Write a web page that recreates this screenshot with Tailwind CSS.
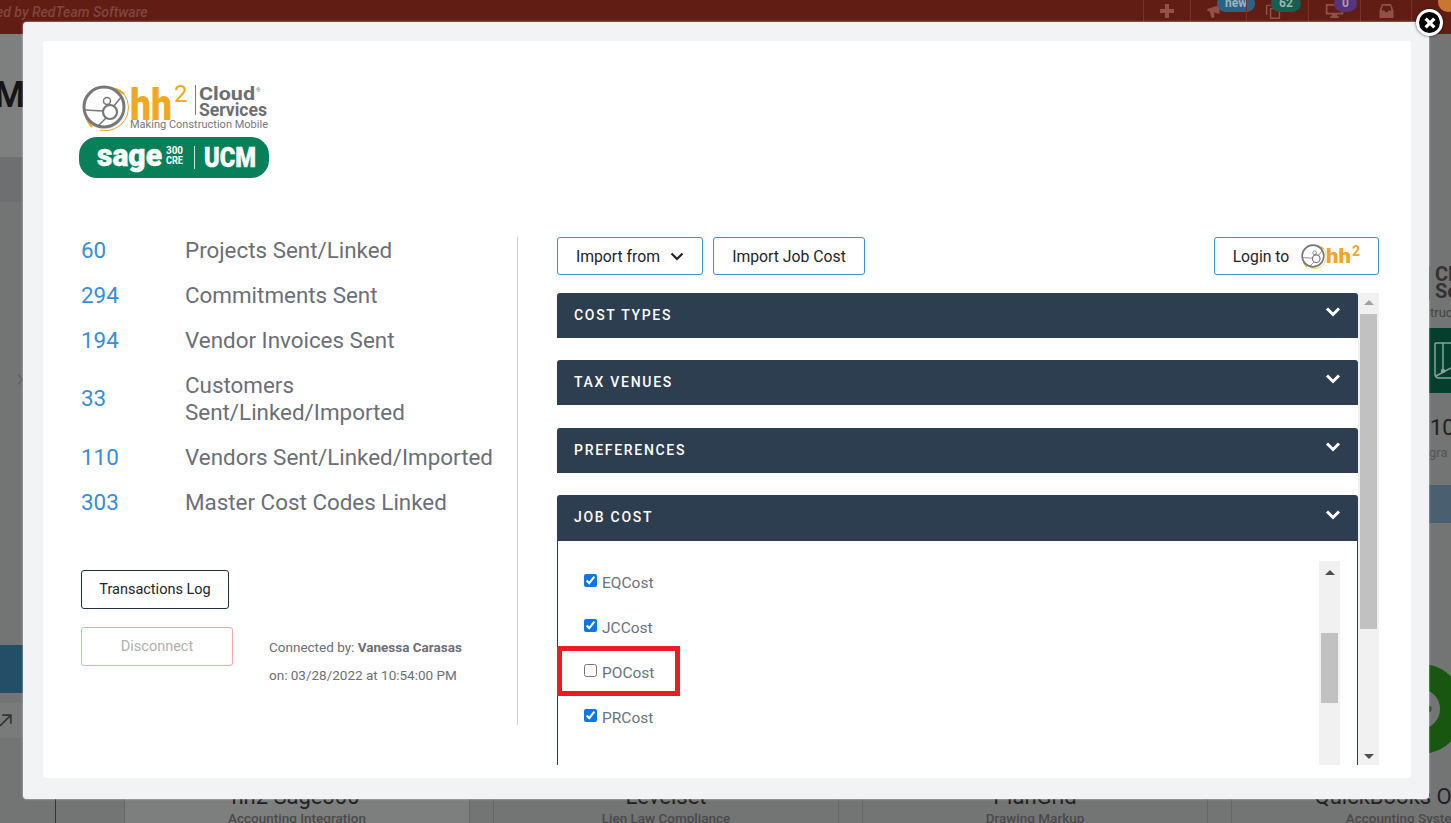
<!DOCTYPE html>
<html lang="en">
<head>
    <meta charset="UTF-8">
    <meta name="viewport" content="width=device-width, initial-scale=1.0">
    <title>hh2 Cloud Services</title>
    <script src="https://cdn.jsdelivr.net/npm/@tailwindcss/browser@4"></script>
</head>
<body class="bg-[#737474] font-[Roboto,sans-serif]">

    <!-- shared hh2 mark -->
    <svg class="hidden" xmlns="http://www.w3.org/2000/svg">
        <symbol id="hh2Mark" viewBox="0 0 48 48">
            <path d="M12 44A23 23 0 0 1 44 11" fill="none" stroke="#f0a722" stroke-width="2.200"/>
            <path d="M44 11A23 23 0 0 1 20 47" fill="none" stroke="#f0a722" stroke-width="1"/>
            <circle cx="24" cy="24" r="20" fill="#fff" stroke="#77787b" stroke-width="3"/>
            <g fill="none" stroke="#77787b" stroke-width="1.500">
                <circle cx="30" cy="29" r="7" stroke-width="2.200"/>
                <circle cx="27" cy="18" r="3.500"/>
                <path d="M5 27l18 1M28 21l1 2M34 23l8-10M26 35l-8 8"/>
            </g>
        </symbol>
    </svg>

    <div class="relative h-[823px] w-[1451px] overflow-hidden">

        <!-- Page behind the modal -->
        <div class="flex h-full flex-col">
            <div class="relative flex h-[34px] shrink-0 items-center justify-between bg-[#611d14]">
                <span class="-ml-[4px] -mt-[10px] text-sm italic font-medium text-[#80453d]">ed by RedTeam Software</span>
                <div class="flex h-full items-center text-[#8f524a]">
                    <div class="flex h-full w-[47px] items-center justify-center border-l border-[#743329] pb-[12px]">
                        <svg class="h-3.5 w-3.5" viewBox="0 0 14 14" fill="currentColor"><path d="M5 0h4v5h5v4H9v5H5V9H0V5h5z"/></svg>
                    </div>
                    <div class="relative flex h-full w-[56px] items-center justify-center border-l border-[#743329] pb-[12px]">
                        <svg class="-ml-[6px] h-[13px] w-[17px]" viewBox="0 0 20 16" fill="currentColor"><path d="M0 5l15-5v11L8 9l1 6-4 1-2-8-3-1z"/></svg>
                        <span class="absolute -top-[5px] left-[26px] rounded-full bg-[#2b6384] px-2 text-xs leading-[17px] font-bold text-[#9fb4bd]">new</span>
                    </div>
                    <div class="relative flex h-full w-[62px] items-center justify-center border-l border-[#743329] pb-[12px]">
                        <svg class="-ml-[10px] h-4 w-4" viewBox="0 0 20 20" fill="none" stroke="currentColor" stroke-width="1.800"><path d="M2 3v12M2 3h5M7 7h11v12H7z"/></svg>
                        <span class="absolute -top-[5px] left-[24px] rounded-full bg-[#14614f] px-2 text-xs leading-[17px] font-bold text-[#9fb4ab]">62</span>
                    </div>
                    <div class="relative flex h-full w-[52px] items-center justify-center border-l border-[#743329] pb-[12px]">
                        <svg class="h-[14px] w-[19px]" viewBox="0 0 20 16" fill="currentColor"><path d="M0 0h20v12h-7v2h2v2H5v-2h2v-2H0zM2 2v8h16V2z"/></svg>
                        <span class="absolute -top-[5px] left-[25px] rounded-full bg-[#55347a] px-2 text-xs leading-[17px] font-bold text-[#a99ab5]">0</span>
                    </div>
                    <div class="flex h-full w-[51px] items-center justify-center border-l border-[#743329] pb-[12px]">
                        <svg class="h-[14px] w-[17px]" viewBox="0 0 17 17" fill="currentColor"><path d="M3 0h11l3 8v9H0V8zM4 2L2.500 8H6l1 2h3l1-2h3.500L13 2z"/></svg>
                    </div>
                    <div class="relative h-full w-10 border-l border-[#743329]">
                        <span class="absolute -top-2 left-[26px] h-5 w-5 rounded-full bg-[#c8772e]"></span>
                    </div>
                </div>
            </div>

            <div class="flex h-[753px] shrink-0 justify-between">
                <!-- left sliver -->
                <div class="flex w-[23px] flex-col overflow-hidden">
                    <div class="flex h-[123px] shrink-0 items-center bg-[#7e7f7f]">
                        <span class="text-[36px] leading-none font-bold text-[#151515] -ml-[6px] -mt-[2px]">M</span>
                    </div>
                    <div class="h-[45px] shrink-0 bg-[#6e6f70]"></div>
                    <div class="flex h-[183px] shrink-0 items-end justify-end">
                        <svg class="h-[11px] w-[5px]" viewBox="0 0 5 11" fill="none" stroke="#5f6061" stroke-width="1.200"><path d="M0 .5l4.500 5-4.500 5"/></svg>
                    </div>
                    <div class="h-[260px] shrink-0"></div>
                    <div class="h-[48px] shrink-0 bg-[#244e68]"></div>
                    <div class="mt-[10px] flex h-[35px] shrink-0 items-center rounded-r bg-[#797a7a]">
                        <svg class="h-[13px] w-[13px]" viewBox="0 0 12 12" fill="none" stroke="#333" stroke-width="1.500"><path d="M0 11L10 1M2 1h8v8"/></svg>
                    </div>
                </div>
                <!-- right sliver -->
                <div class="flex w-[22px] flex-col overflow-hidden">
                    <div class="h-[232px] shrink-0"></div>
                    <div class="flex shrink-0 flex-col border-l border-[#555] pl-[5px] text-[20px] leading-[17px] font-bold text-[#333]">
                        <span>Cl</span>
                        <span>Se</span>
                    </div>
                    <span class="mt-[5px] shrink-0 pl-[1px] text-[13px] leading-[16px] text-[#444]">truc</span>
                    <svg class="mt-[7px] h-[65px] w-[22px] shrink-0 bg-[#033f2c]" viewBox="0 0 22 65" fill="none" stroke="#8aa399" stroke-width="1.500">
                        <path d="M6 15v31q0 4 4 4h12M6 15h16M14 15v27M7 48l15-8"/>
                        <circle cx="14" cy="43" r="1.500" fill="#8aa399"/>
                    </svg>
                    <span class="mt-[23px] shrink-0 pl-[1px] text-[22px] leading-[24px] text-[#1f1f1f]">10</span>
                    <span class="mt-[4px] shrink-0 text-[13px] leading-[18px] text-[#555]">gra</span>
                    <div class="mt-[23px] h-[38px] shrink-0 bg-[#4a6070]"></div>
                    <svg class="mt-[141px] h-[90px] w-[22px] shrink-0" viewBox="0 0 22 90">
                        <circle cx="-9" cy="45" r="32.500" fill="none" stroke="#17570f" stroke-width="25"/>
                        <circle cx="-1" cy="45" r="3.500" fill="#17570f"/>
                    </svg>
                </div>
            </div>

            <!-- cards strip, mostly covered by the modal -->
            <div class="flex flex-1 pl-[55px] text-center">
                <div class="w-[69px] shrink-0 border-l border-[#333]"></div>
                <div class="w-[346px] shrink-0 border-x border-[#666] bg-[#7d7e7e]">
                    <p class="-ml-[3px] text-[22px] leading-[20px] text-[#1f1f1f]">hh2 Sage300</p>
                    <p class="mt-[3px] text-[13.500px] leading-[16px] font-medium text-[#4a4a4a]">Accounting Integration</p>
                </div>
                <div class="ml-[23px] w-[346px] shrink-0 border-x border-[#666]">
                    <p class="text-[22px] leading-[20px] text-[#1f1f1f]">Levelset</p>
                    <p class="mt-[3px] text-[13.500px] leading-[16px] font-medium text-[#4a4a4a]">Lien Law Compliance</p>
                </div>
                <div class="ml-[23px] w-[346px] shrink-0 border-x border-[#666]">
                    <p class="text-[22px] leading-[20px] text-[#1f1f1f]">PlanGrid</p>
                    <p class="mt-[3px] text-[13.500px] leading-[16px] font-medium text-[#4a4a4a]">Drawing Markup</p>
                </div>
                <div class="ml-[23px] w-[346px] shrink-0 border-l border-[#666]">
                    <p class="ml-[4px] text-[22px] leading-[20px] text-[#1f1f1f]">QuickBooks Online</p>
                    <p class="mt-[3px] text-[13.500px] leading-[16px] font-medium text-[#4a4a4a]">Accounting System</p>
                </div>
            </div>
        </div>

        <!-- Modal -->
        <div class="absolute top-[22px] left-[23px] h-[777px] w-[1406px] rounded-sm bg-[#f1f3f5] pt-[19px] pl-5 shadow-[0_0_2px_rgba(255,255,255,0.8)]">
            <div class="flex h-[737px] w-[1368px] flex-col rounded-[3px] bg-white pt-[42px] pl-[38px]">

                <!-- Logo -->
                <svg class="-ml-[2px] h-[96px] w-[192px] shrink-0" viewBox="0 0 192 96">
                    <use href="#hh2Mark" x="0" y="0" width="50" height="48"/>
                    <text transform="translate(51 36.500) scale(1 1.200)" font-family="Roboto" font-weight="900" font-size="37" fill="#f0a722" textLength="42" lengthAdjust="spacingAndGlyphs">hh</text>
                    <text x="95" y="19" font-family="Roboto" font-size="24" fill="#f0a722">2</text>
                    <path d="M116.500 2v30" stroke="#77787b" stroke-width="1"/>
                    <text x="120" y="17" font-family="Roboto" font-weight="700" font-size="18" fill="#6d6e71" textLength="56" lengthAdjust="spacingAndGlyphs">Cloud</text>
                    <text x="177" y="9" font-family="Roboto" font-size="6" fill="#6d6e71">®</text>
                    <text x="120" y="33" font-family="Roboto" font-weight="700" font-size="18" fill="#6d6e71" textLength="68" lengthAdjust="spacingAndGlyphs">Services</text>
                    <text x="51" y="45" font-family="Roboto" font-size="11.500" fill="#77787b" textLength="138" lengthAdjust="spacingAndGlyphs">Making Construction Mobile</text>
                    <rect x="0" y="54" width="190" height="41" rx="18" fill="#078059"/>
                    <text x="18" y="83" font-family="Roboto" font-weight="900" font-size="31" fill="#fff" stroke="#fff" stroke-width=".5" textLength="65" lengthAdjust="spacingAndGlyphs">sage</text>
                    <text x="87" y="71" font-family="Roboto" font-weight="700" font-size="10" fill="#fff" textLength="17" lengthAdjust="spacingAndGlyphs">300</text>
                    <text x="87" y="81" font-family="Roboto" font-weight="700" font-size="10" fill="#fff" textLength="17" lengthAdjust="spacingAndGlyphs">CRE</text>
                    <path d="M115.500 63v23" stroke="#cfe5dc" stroke-width="1"/>
                    <text x="125" y="84" font-family="Roboto" font-weight="900" font-size="28" fill="#fff" stroke="#fff" stroke-width=".5" textLength="52" lengthAdjust="spacingAndGlyphs">UCM</text>
                </svg>

                <div class="mt-[58px] flex items-start">

                    <!-- Left column -->
                    <div class="flex h-[488px] w-[437px] shrink-0 flex-col border-r border-[#c9cdd1] pr-5">
                        <div class="grid grid-cols-[104px_1fr] items-center gap-y-[18px] text-[22.400px] leading-[27px]">
                            <span class="text-[#3a8ed6]">60</span>
                            <span class="text-[#6b6f76]">Projects Sent/Linked</span>
                            <span class="text-[#3a8ed6]">294</span>
                            <span class="text-[#6b6f76]">Commitments Sent</span>
                            <span class="text-[#3a8ed6]">194</span>
                            <span class="text-[#6b6f76]">Vendor Invoices Sent</span>
                            <span class="-mt-[2px] text-[#3a8ed6]">33</span>
                            <span class="text-[#6b6f76]">Customers Sent/Linked/Imported</span>
                            <span class="text-[#3a8ed6]">110</span>
                            <span class="text-[#6b6f76]">Vendors Sent/Linked/Imported</span>
                            <span class="text-[#3a8ed6]">303</span>
                            <span class="text-[#6b6f76]">Master Cost Codes Linked</span>
                        </div>
                        <button class="mt-[54px] h-[39px] w-[148px] rounded-[3px] border border-[#1e2f3f] text-[14.500px] text-[#212529]">Transactions Log</button>
                        <div class="mt-[18px] flex items-start">
                            <button class="h-[39px] w-[152px] rounded-[3px] border border-[#f3a9a9] text-[14.500px] text-[#b0b0b0]">Disconnect</button>
                            <div class="mt-[6px] ml-9 text-[13.500px] leading-[28px] text-[#6b6f76]">
                                <p>Connected by: <span class="font-bold">Vanessa Carasas</span></p>
                                <p>on: 03/28/2022 at 10:54:00 PM</p>
                            </div>
                        </div>
                    </div>

                    <!-- Right column -->
                    <div class="ml-[39px] flex w-[822px] shrink-0 flex-col">
                        <div class="flex items-center">
                            <button class="flex h-[38px] w-[146px] items-center justify-center gap-[10px] rounded-[3px] border border-[#3b92d1] pt-[2px] text-[15.750px] text-[#212529]">
                                Import from
                                <svg class="-mt-[2px] h-[9px] w-[14px]" viewBox="0 0 14 9" fill="none" stroke="#212529" stroke-width="2.200"><path d="M1.500 1.500L7 7l5.500-5.500"/></svg>
                            </button>
                            <button class="ml-[10px] h-[38px] w-[152px] rounded-[3px] border border-[#3b92d1] pt-[2px] text-[15.750px] text-[#212529]">Import Job Cost</button>
                            <button class="ml-auto flex h-[38px] w-[165px] items-center justify-center rounded-[3px] border border-[#3b92d1] text-[15.750px] text-[#212529]">
                                <span class="pt-[2px]">Login to</span>
                                <svg class="ml-[11px] h-[26px] w-[60px]" viewBox="0 0 60 26">
                                    <use href="#hh2Mark" x="0" y="0" width="26" height="26"/>
                                    <text x="26" y="20" font-family="Roboto" font-weight="900" font-size="21" fill="#f0a722" textLength="25" lengthAdjust="spacingAndGlyphs">hh</text>
                                    <text x="52" y="13" font-family="Roboto" font-weight="700" font-size="14" fill="#f0a722">2</text>
                                </svg>
                            </button>
                        </div>

                        <div class="relative mt-[18px] flex h-[472px] overflow-hidden">
                            <div class="flex w-[801px] shrink-0 flex-col">
                                <div class="flex h-[45px] shrink-0 items-center justify-between rounded-t-[3px] bg-[#2c3e50] pr-[17px] pb-[2px] pl-[17px] text-sm font-medium tracking-[1.700px] text-white">
                                    COST TYPES
                                    <svg class="-mt-[5px] h-[10px] w-[16px]" viewBox="0 0 16 10" fill="none" stroke="#fff" stroke-width="3"><path d="M2 1.500L8 7.500l6-6"/></svg>
                                </div>
                                <div class="mt-[22px] flex h-[45px] shrink-0 items-center justify-between rounded-t-[3px] bg-[#2c3e50] pr-[17px] pb-[2px] pl-[17px] text-sm font-medium tracking-[1.700px] text-white">
                                    TAX VENUES
                                    <svg class="-mt-[5px] h-[10px] w-[16px]" viewBox="0 0 16 10" fill="none" stroke="#fff" stroke-width="3"><path d="M2 1.500L8 7.500l6-6"/></svg>
                                </div>
                                <div class="mt-[23px] flex h-[45px] shrink-0 items-center justify-between rounded-t-[3px] bg-[#2c3e50] pr-[17px] pb-[2px] pl-[17px] text-sm font-medium tracking-[1.700px] text-white">
                                    PREFERENCES
                                    <svg class="-mt-[5px] h-[10px] w-[16px]" viewBox="0 0 16 10" fill="none" stroke="#fff" stroke-width="3"><path d="M2 1.500L8 7.500l6-6"/></svg>
                                </div>
                                <div class="mt-[22px] flex h-[46px] shrink-0 items-center justify-between rounded-t-[3px] bg-[#2c3e50] pr-[17px] pb-[2px] pl-[17px] text-sm font-medium tracking-[1.700px] text-white">
                                    JOB COST
                                    <svg class="-mt-[5px] h-[10px] w-[16px]" viewBox="0 0 16 10" fill="none" stroke="#fff" stroke-width="3"><path d="M2 1.500L8 7.500l6-6"/></svg>
                                </div>
                                <div class="flex min-h-0 flex-1 border-x border-[#2c3e50] pt-5">
                                    <div class="flex flex-1 flex-col gap-[23px] pt-[11px] pl-[26px] text-[15.500px] leading-[22px] text-[#6b7280]">
                                        <label class="flex items-center gap-[5px]"><input type="checkbox" checked class="m-0 mb-[6px] h-[13px] w-[13px] accent-[#0b76ef]">EQCost</label>
                                        <label class="flex items-center gap-[5px]"><input type="checkbox" checked class="m-0 mb-[6px] h-[13px] w-[13px] accent-[#0b76ef]">JCCost</label>
                                        <label class="flex items-center gap-[5px]"><input type="checkbox" class="m-0 mb-[6px] h-[13px] w-[13px]">POCost</label>
                                        <label class="flex items-center gap-[5px]"><input type="checkbox" checked class="m-0 mb-[6px] h-[13px] w-[13px] accent-[#0b76ef]">PRCost</label>
                                    </div>
                                    <!-- inner scrollbar -->
                                    <div class="mr-[17px] flex w-[21px] shrink-0 flex-col items-center bg-[#f1f1f1]">
                                        <div class="mt-[9px] h-0 w-0 border-x-[5px] border-b-[5px] border-x-transparent border-b-[#505050]"></div>
                                        <div class="mt-[58px] h-[70px] w-[17px] bg-[#c1c1c1]"></div>
                                    </div>
                                </div>
                            </div>
                            <!-- outer scrollbar -->
                            <div class="flex w-[21px] shrink-0 flex-col items-center bg-[#f1f1f1]">
                                <div class="mt-[7px] h-0 w-0 border-x-[5px] border-b-[5px] border-x-transparent border-b-[#a3a3a3]"></div>
                                <div class="mt-[9px] h-[315px] w-[17px] bg-[#c1c1c1]"></div>
                                <div class="mt-auto mb-[6px] h-0 w-0 border-x-[5px] border-t-[5px] border-x-transparent border-t-[#505050]"></div>
                            </div>
                            <!-- red highlight over POCost -->
                            <div class="absolute top-[353px] left-0 h-[50px] w-[123px] border-[5px] border-[#ed1c24]"></div>
                        </div>
                    </div>
                </div>
            </div>
        </div>

        <!-- Close button -->
        <button class="absolute top-[9px] left-[1416px] flex h-[27px] w-[27px] items-center justify-center rounded-full border-[3px] border-white bg-black shadow-[0_0_3px_rgba(0,0,0,0.7)]">
            <svg class="h-[12px] w-[12px]" viewBox="0 0 11 11" fill="none" stroke="#fff" stroke-width="3"><path d="M1.500 1.500l8 8M9.500 1.500l-8 8"/></svg>
        </button>
    </div>
</body>
</html>
